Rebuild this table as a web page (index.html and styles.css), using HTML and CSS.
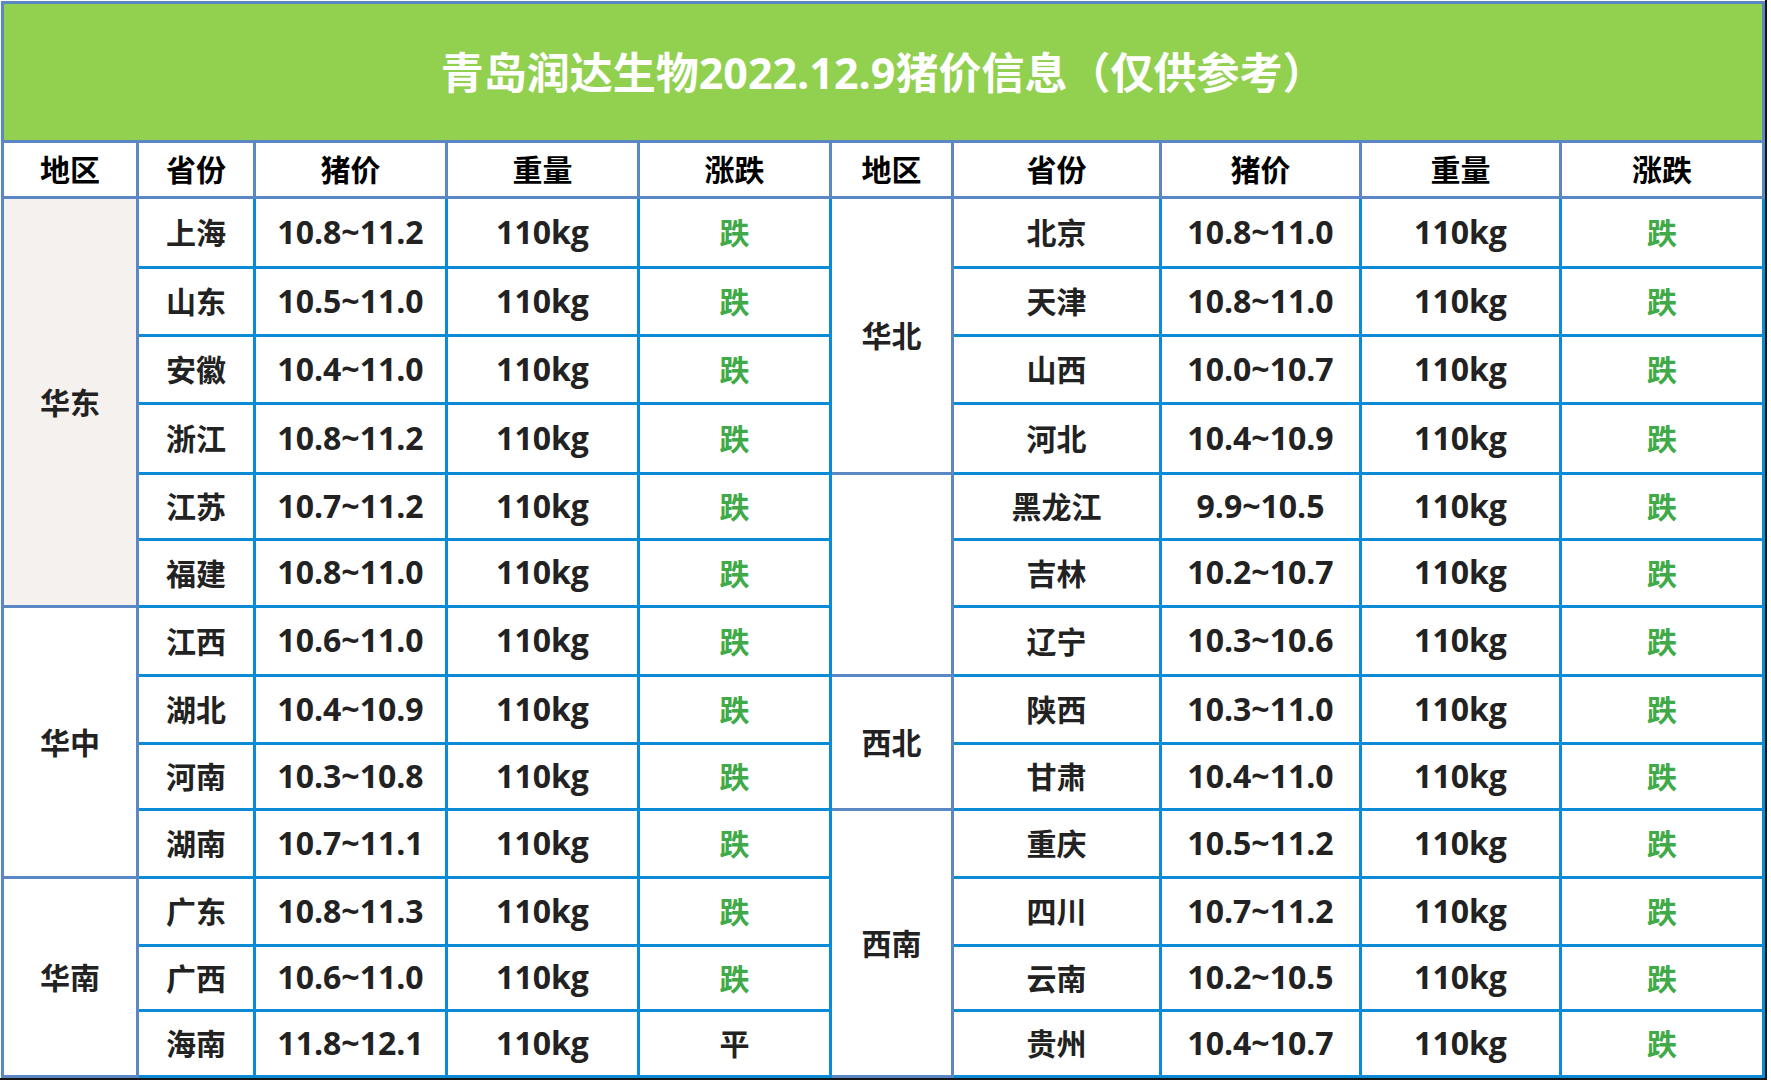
FILE: index.html
```html
<!DOCTYPE html>
<html lang="zh-CN">
<head>
<meta charset="utf-8">
<title>青岛润达生物2022.12.9猪价信息</title>
<link rel="stylesheet" href="styles.css">
</head>
<body>
<div class="sheet">
<table class="price-table">
  <colgroup>
    <col class="c-region"><col class="c-prov"><col class="c-price"><col class="c-weight"><col class="c-trend">
    <col class="c-region2"><col class="c-prov2"><col class="c-price2"><col class="c-weight2"><col class="c-trend2">
  </colgroup>
  <tr class="title-row"><td colspan="10" class="title">青岛润达生物2022.12.9猪价信息（仅供参考）</td></tr>
  <tr class="head-row">
    <th>地区</th><th>省份</th><th>猪价</th><th>重量</th><th>涨跌</th>
    <th>地区</th><th>省份</th><th>猪价</th><th>重量</th><th>涨跌</th>
  </tr>
  <tr>
    <td rowspan="6" class="region east">华东</td><td>上海</td><td class="num">10.8~11.2</td><td class="num">110kg</td><td class="fall">跌</td>
    <td rowspan="4" class="region">华北</td><td>北京</td><td class="num">10.8~11.0</td><td class="num">110kg</td><td class="fall">跌</td>
  </tr>
  <tr>
    <td>山东</td><td class="num">10.5~11.0</td><td class="num">110kg</td><td class="fall">跌</td>
    <td>天津</td><td class="num">10.8~11.0</td><td class="num">110kg</td><td class="fall">跌</td>
  </tr>
  <tr>
    <td>安徽</td><td class="num">10.4~11.0</td><td class="num">110kg</td><td class="fall">跌</td>
    <td>山西</td><td class="num">10.0~10.7</td><td class="num">110kg</td><td class="fall">跌</td>
  </tr>
  <tr>
    <td>浙江</td><td class="num">10.8~11.2</td><td class="num">110kg</td><td class="fall">跌</td>
    <td>河北</td><td class="num">10.4~10.9</td><td class="num">110kg</td><td class="fall">跌</td>
  </tr>
  <tr>
    <td>江苏</td><td class="num">10.7~11.2</td><td class="num">110kg</td><td class="fall">跌</td>
    <td rowspan="3" class="region"></td><td>黑龙江</td><td class="num">9.9~10.5</td><td class="num">110kg</td><td class="fall">跌</td>
  </tr>
  <tr>
    <td>福建</td><td class="num">10.8~11.0</td><td class="num">110kg</td><td class="fall">跌</td>
    <td>吉林</td><td class="num">10.2~10.7</td><td class="num">110kg</td><td class="fall">跌</td>
  </tr>
  <tr>
    <td rowspan="4" class="region">华中</td><td>江西</td><td class="num">10.6~11.0</td><td class="num">110kg</td><td class="fall">跌</td>
    <td>辽宁</td><td class="num">10.3~10.6</td><td class="num">110kg</td><td class="fall">跌</td>
  </tr>
  <tr>
    <td>湖北</td><td class="num">10.4~10.9</td><td class="num">110kg</td><td class="fall">跌</td>
    <td rowspan="2" class="region">西北</td><td>陕西</td><td class="num">10.3~11.0</td><td class="num">110kg</td><td class="fall">跌</td>
  </tr>
  <tr>
    <td>河南</td><td class="num">10.3~10.8</td><td class="num">110kg</td><td class="fall">跌</td>
    <td>甘肃</td><td class="num">10.4~11.0</td><td class="num">110kg</td><td class="fall">跌</td>
  </tr>
  <tr>
    <td>湖南</td><td class="num">10.7~11.1</td><td class="num">110kg</td><td class="fall">跌</td>
    <td rowspan="4" class="region">西南</td><td>重庆</td><td class="num">10.5~11.2</td><td class="num">110kg</td><td class="fall">跌</td>
  </tr>
  <tr>
    <td rowspan="3" class="region">华南</td><td>广东</td><td class="num">10.8~11.3</td><td class="num">110kg</td><td class="fall">跌</td>
    <td>四川</td><td class="num">10.7~11.2</td><td class="num">110kg</td><td class="fall">跌</td>
  </tr>
  <tr>
    <td>广西</td><td class="num">10.6~11.0</td><td class="num">110kg</td><td class="fall">跌</td>
    <td>云南</td><td class="num">10.2~10.5</td><td class="num">110kg</td><td class="fall">跌</td>
  </tr>
  <tr>
    <td>海南</td><td class="num">11.8~12.1</td><td class="num">110kg</td><td class="flat">平</td>
    <td>贵州</td><td class="num">10.4~10.7</td><td class="num">110kg</td><td class="fall">跌</td>
  </tr>
</table>
</div>
</body>
</html>
```

FILE: styles.css
```css
html, body {
  margin: 0;
  padding: 0;
  background: #ffffff;
}

body {
  font-family: "Open Sans", "Noto Sans CJK SC", sans-serif;
  width: 1771px;
  height: 1083px;
  overflow: hidden;
}

.sheet {
  width: 1767px;
  height: 1080px;
  box-sizing: border-box;
  padding: 1px 0 0 1px;
  border-right: 2px solid #151515;
  border-bottom: 2px solid #151515;
}

.price-table {
  border-collapse: separate;
  border-spacing: 0;
  table-layout: fixed;
  width: 1764px;
  border-left: 3px solid #5b88c4;
  border-top: 3px solid #5b88c4;
}

.c-region { width: 135px; }
.c-prov { width: 117px; }
.c-price, .c-weight, .c-trend { width: 192px; }
.c-region2 { width: 122px; }
.c-prov2 { width: 208px; }
.c-price2, .c-weight2 { width: 200px; }
.c-trend2 { width: 203px; }

.price-table td,
.price-table th {
  padding: 0 0 3px 0;
  text-align: center;
  vertical-align: middle;
  border-right: 3px solid #0b8ad6;
  border-bottom: 3px solid #0b8ad6;
  font-size: 30px;
  font-weight: 700;
  color: #222222;
  white-space: nowrap;
}

.price-table .num {
  font-size: 32px;
}

.price-table .title {
  background: #92d050;
  color: #ffffff;
  font-size: 43px;
  border-right-color: #5b88c4;
  border-bottom-color: #5b88c4;
  padding-bottom: 3px;
}

.title-row { height: 139px; }
.head-row { height: 56px; }

.price-table th {
  color: #000000;
  border-right-color: #5b88c4;
  border-bottom-color: #5b88c4;
  padding-bottom: 3px;
}

.price-table .region {
  border-right-color: #5b88c4;
  border-bottom-color: #5b88c4;
}

.price-table .east {
  background: #f5f1ee;
}

.price-table .fall {
  color: #3faa47;
}

.price-table tr:nth-child(3) { height: 70px; }
.price-table tr:nth-child(4) { height: 68px; }
.price-table tr:nth-child(5) { height: 68px; }
.price-table tr:nth-child(6) { height: 70px; }
.price-table tr:nth-child(7) { height: 66px; }
.price-table tr:nth-child(8) { height: 67px; }
.price-table tr:nth-child(9) { height: 69px; }
.price-table tr:nth-child(10) { height: 68px; }
.price-table tr:nth-child(11) { height: 66px; }
.price-table tr:nth-child(12) { height: 68px; }
.price-table tr:nth-child(13) { height: 68px; }
.price-table tr:nth-child(14) { height: 65px; }
.price-table tr:nth-child(15) { height: 66px; }
```
